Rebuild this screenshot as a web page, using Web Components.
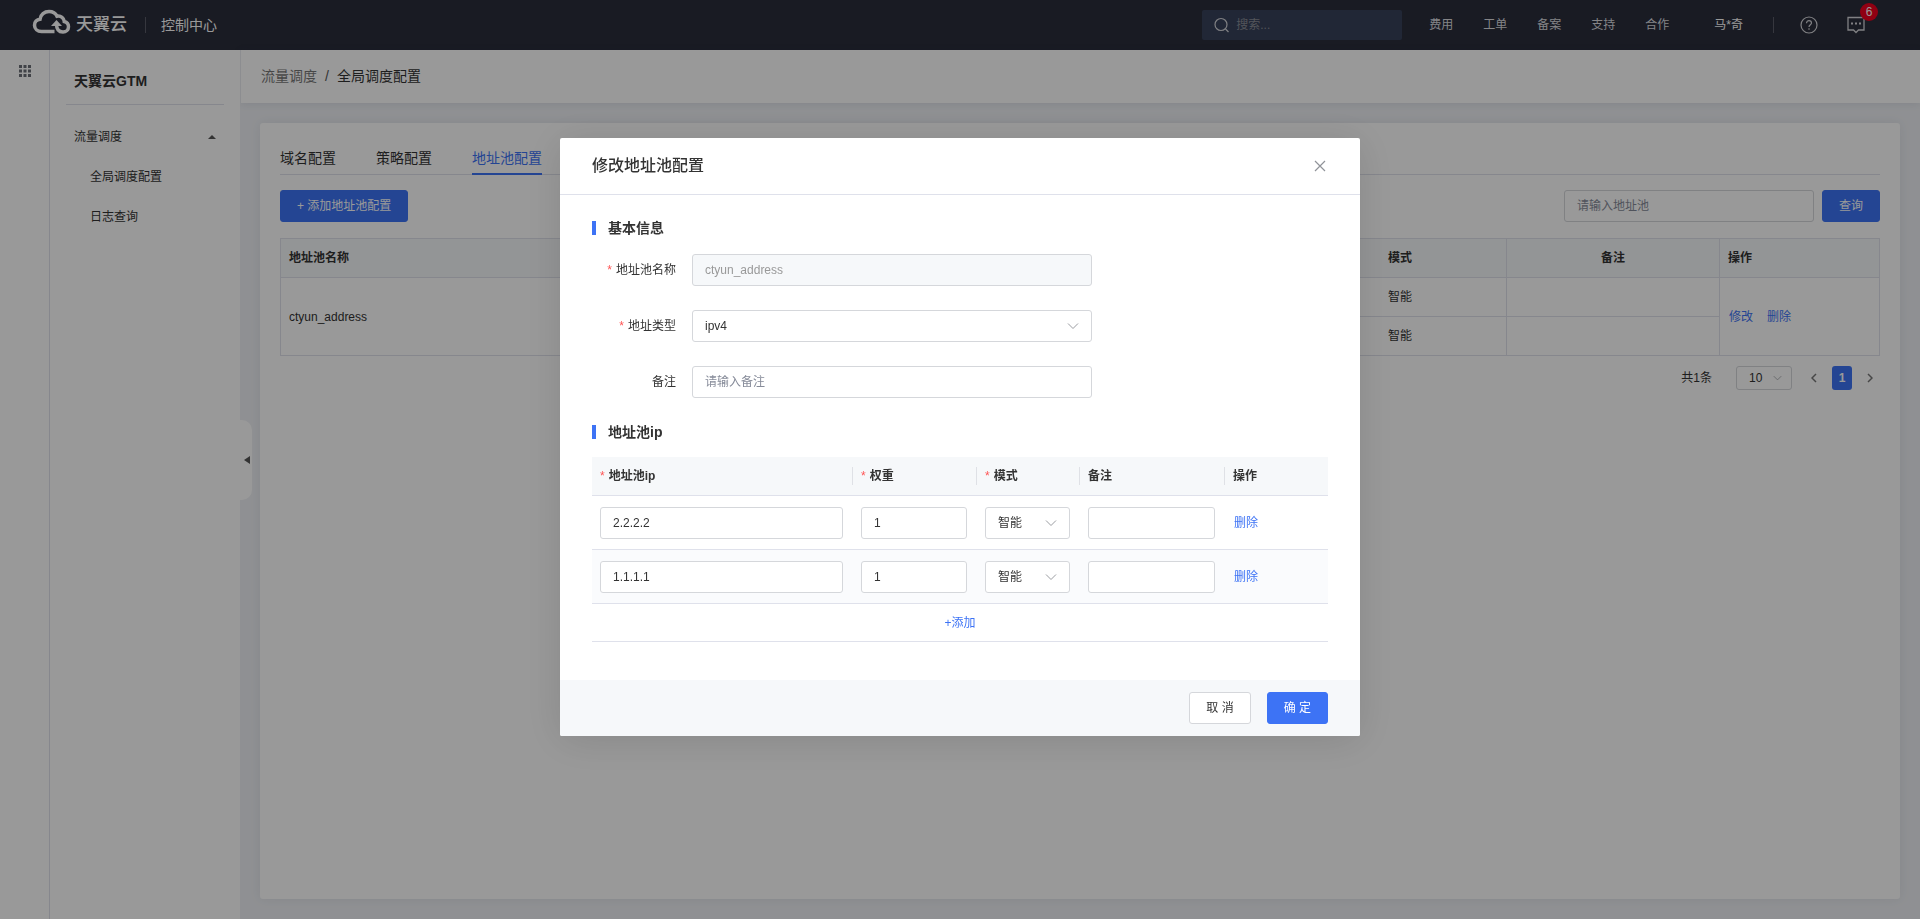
<!DOCTYPE html>
<html lang="zh-CN">
<head>
<meta charset="utf-8">
<meta name="viewport" content="width=device-width, initial-scale=1">
<title>全局调度配置 - 天翼云</title>
<style>
  :root {
    --primary: #3d73f5;
    --text: #333333;
    --line: #dfe1eb;
    --field: #d5d7db;
    --soft: #f6f8fa;
  }
  body {
    margin: 0;
    font: 12px/18px "Liberation Sans", "Noto Sans CJK SC", sans-serif;
    color: var(--text);
  }
</style>
</head>
<body>
<gtm-app></gtm-app>

<script>
const controls = `
  * { box-sizing: border-box; }
  input, select, button { font: inherit; color: inherit; margin: 0; outline: none; }
  input, select {
    width: 100%; height: 32px; padding: 0 12px; border: 1px solid var(--field);
    border-radius: 3px; background: #fff; appearance: none; display: block;
  }
  input::placeholder { color: #868b99; opacity: 1; }
  input:disabled { background: #f6f8fa; color: #999; }
  .pick { display: grid; align-items: center; }
  .pick > * { grid-area: 1 / 1; }
  .pick svg { justify-self: end; margin-right: 13px; pointer-events: none; }
  button { cursor: pointer; }
  .btn { height: 32px; padding: 0 16px; border: 1px solid var(--field); border-radius: 3px; background: #fff; white-space: nowrap; }
  .btn.primary { background: var(--primary); border-color: var(--primary); color: #fff; }
  a { color: var(--primary); text-decoration: none; }
`;
const chevron = `<svg width="12" height="8" viewBox="0 0 12 8" fill="none" stroke="#9a9ca1"><path d="M1 1.500 6 6.500 11 1.500"/></svg>`;

function define(name, css, html) {
  customElements.define(name, class extends HTMLElement {
    constructor() {
      super();
      const t = document.createElement('template');
      const body = typeof html === 'function' ? html(this) : html;
      t.innerHTML = `<style>${controls}${css}</style>${body}`;
      this.attachShadow({ mode: 'open' }).append(t.content.cloneNode(true));
    }
  });
}

define('top-bar', `
  :host { display: flex; align-items: center; height: 50px; background: #2a2d3b; color: #fff; padding: 0 40px 0 32px; }
  .logo { display: flex; align-items: center; gap: 5px; color: #fff; font-size: 17px; font-weight: 500; line-height: 24px; margin-right: 18px; }
  .logo svg { margin-bottom: 6px; }
  .bar { width: 1px; height: 16px; background: #5a5d68; }
  .name { font-size: 14px; margin-left: 15px; color: #fff; }
  .search { width: 200px; margin-left: auto; display: grid; align-items: center; }
  .search > * { grid-area: 1 / 1; }
  .search svg { margin-left: 12px; }
  .search input { height: 30px; border: 0; background: #37415b; padding-left: 34px; color: #fff; border-radius: 2px; }
  .search input::placeholder { color: #8a8d96; }
  nav { display: flex; gap: 30px; margin: 0 45px 0 27px; }
  nav a { color: #dcdde0; }
  .user { color: #fff; margin-right: 30px; }
  .icons { display: flex; gap: 29px; margin: 0 15px 0 26px; align-items: center; }
  .icons button { border: 0; background: none; padding: 0; display: flex; position: relative; color: #d5d6da; }
  .badge { position: absolute; left: 13px; top: -13px; width: 18px; height: 18px; border-radius: 9px; background: #f0001f; color: #fff; text-align: center; }
`, `
  <a class="logo" href="#">
    <svg width="39" height="26" viewBox="0 0 39 26" fill="none" stroke="#fff" stroke-width="3.500">
      <path d="M22.500 22.500H9.500C5.500 22.500 2.500 19.800 2.500 16.200 2.500 12.800 4.800 10.500 8 10.200 8.500 5.500 12.500 2.500 17 2.500 20.500 2.500 23.500 4 25 7.200 29 6.500 32 9 32.300 12.500 35 13.200 36.500 15.300 36.500 17.700 36.500 20.800 34 23 31 23 26.500 23 24.500 20 24.500 15"/>
      <path d="M19 17 24.500 11 30 17Z" fill="#fff" stroke="none"/>
    </svg><span>天翼云</span>
  </a>
  <span class="bar"></span>
  <span class="name">控制中心</span>
  <div class="search">
    <input type="search" aria-label="搜索" placeholder="搜索...">
    <svg width="16" height="16" viewBox="0 0 16 16" fill="none" stroke="#d5d6da" stroke-width="1.200"><circle cx="7" cy="7.500" r="6"/><path d="m11.500 12 3 3"/></svg>
  </div>
  <nav><a href="#">费用</a><a href="#">工单</a><a href="#">备案</a><a href="#">支持</a><a href="#">合作</a></nav>
  <a class="user" href="#">马*奇</a>
  <span class="bar"></span>
  <div class="icons">
    <button aria-label="帮助"><svg width="18" height="18" viewBox="0 0 18 18" fill="none" stroke="currentColor" stroke-width="1.200"><circle cx="9" cy="9" r="8"/><path d="M6.500 7.200C6.500 5.600 7.600 4.700 9 4.700S11.500 5.600 11.500 7C11.500 8.600 9 8.900 9 10.900"/><path d="M9 12.300v1.500"/></svg></button>
    <button aria-label="消息"><svg width="18" height="18" viewBox="0 0 18 18" fill="none" stroke="currentColor" stroke-width="1.300"><path d="M1 1.500H17V14H11.500L9 16.500 6.500 14H1Z"/><path d="M4 7.500h2M8 7.500h2M12 7.500h2" stroke-width="2"/></svg><span class="badge">6</span></button>
  </div>
`);

define('app-rail', `
  :host { display: block; width: 50px; border-right: 1px solid var(--line); background: #fff; padding: 15px 0 0 19px; box-sizing: border-box; flex: none; }
  button { border: 0; background: none; padding: 0; display: flex; }
`, `<button aria-label="产品"><svg width="12" height="12" viewBox="0 0 12 12" fill="#6d7078"><path d="M0 0h3v3H0zM4.500 0h3v3h-3zM9 0h3v3H9zM0 4.500h3v3H0zM4.500 4.500h3v3h-3zM9 4.500h3v3H9zM0 9h3v3H0zM4.500 9h3v3h-3zM9 9h3v3H9z"/></svg></button>`);

define('side-menu', `
  :host { display: block; width: 190px; background: #fff; position: relative; padding: 0 16px; box-sizing: border-box; flex: none; }
  h1 { font-size: 14px; line-height: 20px; margin: 0; padding: 21px 8px 13px; border-bottom: 1px solid var(--line); }
  ul { list-style: none; margin: 0; padding: 0; }
  ul a { display: flex; align-items: center; justify-content: space-between; height: 40px; color: var(--text); padding: 0 8px; }
  ul ul a { padding-left: 24px; }
  nav { padding-top: 12px; }
  .fold { position: absolute; left: 190px; top: 370px; width: 12px; height: 80px; border: 0; border-radius: 0 10px 10px 0; background: #fff; padding: 0 0 0 4px; display: flex; align-items: center; }
`, `
  <h1>天翼云GTM</h1>
  <nav><ul><li><a href="#">流量调度<svg width="8" height="4" viewBox="0 0 8 4" fill="#555"><path d="M0 4 4 0 8 4Z"/></svg></a>
    <ul><li><a href="#">全局调度配置</a></li><li><a href="#">日志查询</a></li></ul>
  </li></ul></nav>
  <button class="fold" aria-label="收起菜单"><svg width="6" height="8" viewBox="0 0 6 8" fill="#555"><path d="M6 0V8L0 4Z"/></svg></button>
`);

define('bread-crumb', `
  :host { display: block; background: #fff; padding: 16px 20px 17px; border-left: 1px solid #e9ebf0; font-size: 14px; line-height: 20px; box-shadow: 0 1px 8px rgba(40,50,90,.1); }
  nav { display: flex; gap: 8px; }
  a { color: #777; }
  i { font-style: normal; color: #555; }
`, `<nav><a href="#">流量调度</a><i>/</i><span>全局调度配置</span></nav>`);

define('tab-strip', `
  :host { display: flex; gap: 40px; border-bottom: 1px solid var(--line); font-size: 14px; line-height: 20px; }
  a { color: var(--text); padding: 0 0 5px; margin-bottom: -1px; border-bottom: 2px solid transparent; }
  a.on { color: var(--primary); border-color: var(--primary); }
`, `<a href="#">域名配置</a><a href="#">策略配置</a><a href="#" class="on">地址池配置</a>`);

define('pool-tools', `
  :host { display: flex; gap: 8px; padding: 15px 0 16px; }
  .find { width: 250px; margin-left: auto; }
`, `
  <button class="btn primary">+ 添加地址池配置</button>
  <input class="find" aria-label="地址池" placeholder="请输入地址池">
  <button class="btn primary">查询</button>
`);

define('pool-table', `
  :host { display: block; }
  table { width: 100%; border-collapse: collapse; table-layout: fixed; }
  th, td { border: 1px solid var(--line); height: 39px; padding: 0 8px; text-align: center; }
  th { background: var(--soft); font-weight: 700; }
  .l { text-align: left; }
  .name { width: 374px; }
  .mid { width: 213px; }
  .mode { text-align: left; padding-left: 93px; border-right-color: var(--line); }
  .ops { width: 160px; }
  a { margin-left: 1px; }
  a + a { margin-left: 14px; }
`, `
  <table>
    <thead><tr><th class="l name">地址池名称</th><th>地址池ip</th><th>权重</th><th class="mid">模式</th><th class="mid">备注</th><th class="l ops">操作</th></tr></thead>
    <tbody>
      <tr><td class="l" rowspan="2">ctyun_address</td><td>2.2.2.2</td><td>1</td><td>智能</td><td></td><td class="l" rowspan="2"><a href="#">修改</a><a href="#">删除</a></td></tr>
      <tr><td>1.1.1.1</td><td>1</td><td>智能</td><td></td></tr>
    </tbody>
  </table>
`);

define('page-turner', `
  :host { display: flex; justify-content: flex-end; align-items: center; padding-top: 10px; }
  .pick { width: 56px; margin: 0 12px 0 24px; }
  .pick select { height: 24px; }
  .pick svg { margin-right: 10px; width: 9px; }
  button { border: 0; background: none; width: 20px; height: 24px; padding: 0; border-radius: 3px; display: grid; place-items: center; }
  .cur { background: var(--primary); color: #fff; font-weight: 700; margin: 0 8px; }
`, `
  <span>共1条</span>
  <span class="pick"><select aria-label="每页条数"><option>10</option></select>${chevron}</span>
  <button aria-label="上一页"><svg width="6" height="10" viewBox="0 0 6 10" fill="none" stroke="#777" stroke-width="1.500"><path d="M5 1 1 5 5 9"/></svg></button>
  <button class="cur">1</button>
  <button aria-label="下一页"><svg width="6" height="10" viewBox="0 0 6 10" fill="none" stroke="#777" stroke-width="1.500"><path d="M1 1 5 5 1 9"/></svg></button>
`);

define('section-title', `
  :host { display: flex; align-items: center; gap: 12px; font-size: 14px; line-height: 20px; }
  :host::before { content: ""; width: 4px; height: 14px; background: var(--primary); }
  h3 { font: inherit; font-weight: 700; margin: 0; }
`, `<h3><slot></slot></h3>`);

define('form-row', `
  :host { display: grid; grid-template-columns: 84px minmax(0, 400px); column-gap: 16px; align-items: center; }
  label { text-align: right; }
  :host([required]) label::before { content: "*"; color: #f55; margin-right: 4px; }
`, el => {
  const value = el.getAttribute('value') || '';
  const field = el.hasAttribute('choice')
    ? `<span class="pick"><select id="f"><option>${value}</option></select>${chevron}</span>`
    : `<input id="f" value="${value}" placeholder="${el.getAttribute('hint') || ''}" ${el.hasAttribute('locked') ? 'disabled' : ''}>`;
  return `<label for="f">${el.getAttribute('label')}</label>${field}`;
});

const ipRow = ip => `<tr>
  <td><input aria-label="地址池ip" value="${ip}"></td>
  <td><input aria-label="权重" value="1"></td>
  <td><span class="pick"><select aria-label="模式"><option>智能</option></select>${chevron}</span></td>
  <td><input aria-label="备注"></td>
  <td><a href="#">删除</a></td></tr>`;

define('ip-table', `
  :host { display: block; }
  table { width: 100%; border-spacing: 0; table-layout: fixed; }
  th { height: 39px; padding: 0 0 0 8px; background: var(--soft); border-bottom: 1px solid var(--line); text-align: left; font-weight: 700; }
  th span { display: block; border-right: 1px solid #dfe1e6; }
  th:last-child span { border: 0; }
  .req::before { content: "*"; color: #f55; margin-right: 4px; font-weight: 400; }
  td { height: 54px; padding: 0 10px 0 8px; border-bottom: 1px solid var(--line); }
  td a { margin-left: 1px; }
  tbody tr:nth-child(2) td { background: #fafbfd; }
  .add td { height: 38px; text-align: center; padding: 0; }
  .add button { border: 0; background: none; color: var(--primary); padding: 0; }
`, `
  <table>
    <colgroup><col style="width:261px"><col style="width:124px"><col style="width:103px"><col style="width:145px"><col></colgroup>
    <thead><tr><th><span class="req">地址池ip</span></th><th><span class="req">权重</span></th><th><span class="req">模式</span></th><th><span>备注</span></th><th><span>操作</span></th></tr></thead>
    <tbody>${ipRow('2.2.2.2')}${ipRow('1.1.1.1')}
      <tr class="add"><td colspan="5"><button>+添加</button></td></tr>
    </tbody>
  </table>
`);

define('modal-box', `
  :host { position: fixed; inset: 0; background: rgba(0,0,0,.4); padding: 138px 16px 16px; box-sizing: border-box; overflow: auto; z-index: 10; }
  section { max-width: 800px; margin: 0 auto; background: #fff; border-radius: 2px; box-shadow: 0 4px 40px rgba(0,0,0,.12); overflow: hidden; }
  header { display: flex; justify-content: space-between; align-items: center; padding: 16px 34px 16px 32px; border-bottom: 1px solid var(--line); }
  h2 { font-size: 16px; line-height: 24px; font-weight: 500; margin: 0; }
  header button { border: 0; background: none; padding: 0; display: flex; }
  .body { padding: 23px 32px 38px; display: flow-root; }
  footer { background: var(--soft); padding: 12px 32px; display: flex; justify-content: flex-end; gap: 16px; }
`, `
  <section role="dialog" aria-label="修改地址池配置">
    <header><h2>修改地址池配置</h2><button aria-label="关闭"><svg width="12" height="12" viewBox="0 0 12 12" fill="none" stroke="#909399" stroke-width="1.200"><path d="m1 1 10 10m0-10-10 10"/></svg></button></header>
    <div class="body"><slot></slot></div>
    <footer><button class="btn">取 消</button><button class="btn primary">确 定</button></footer>
  </section>
`);

define('gtm-app', `
  :host { display: flex; flex-direction: column; min-height: 100vh; background: #eff1f5; }
  .shell { display: flex; flex: 1; }
  .main { flex: 1; min-width: 0; display: flex; flex-direction: column; }
  .card { flex: 1; margin: 20px 20px 20px; padding: 25px 20px; background: #fff; border-radius: 3px; box-shadow: 0 0 12px rgba(40,50,90,.08); }
  form { display: grid; gap: 24px; padding: 16px 0 24px; margin: 0; }
  ip-table { margin-top: 15px; }
`, `
  <top-bar></top-bar>
  <div class="shell">
    <app-rail></app-rail>
    <side-menu></side-menu>
    <div class="main">
      <bread-crumb></bread-crumb>
      <div class="card">
        <tab-strip></tab-strip>
        <pool-tools></pool-tools>
        <pool-table></pool-table>
        <page-turner></page-turner>
      </div>
    </div>
  </div>
  <modal-box>
    <section-title>基本信息</section-title>
    <form>
      <form-row required locked label="地址池名称" value="ctyun_address"></form-row>
      <form-row required choice label="地址类型" value="ipv4"></form-row>
      <form-row label="备注" hint="请输入备注"></form-row>
    </form>
    <section-title>地址池ip</section-title>
    <ip-table></ip-table>
  </modal-box>
`);
</script>
</body>
</html>
